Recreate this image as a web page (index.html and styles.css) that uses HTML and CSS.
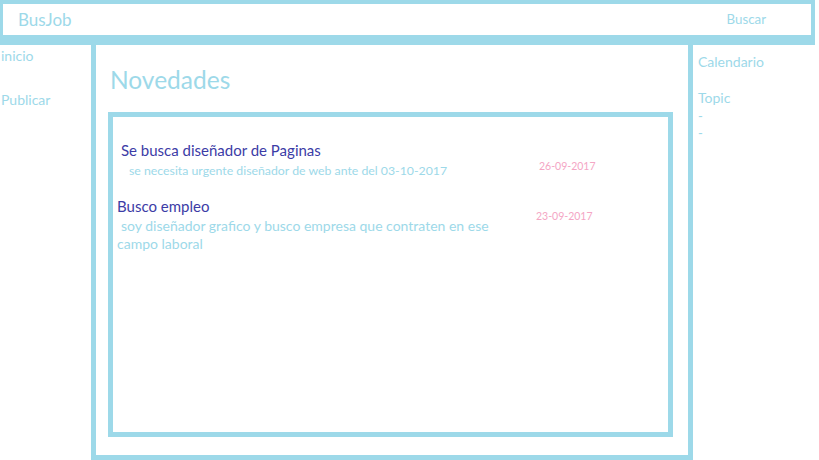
FILE: index.html
```html
<!DOCTYPE html>
<html lang="es">
<head>
<meta charset="utf-8">
<title>BusJob</title>
<link rel="stylesheet" href="styles.css">
</head>
<body>
<header class="topbar">
  <div class="brand">BusJob</div>
  <div class="search">Buscar</div>
</header>
<div class="layout">
  <nav class="leftnav">
    <p class="navlink">inicio</p>
    <p class="navlink">Publicar</p>
  </nav>
  <main class="center">
    <h1 class="title">Novedades</h1>
    <section class="feed">
      <article class="post post-first">
        <div class="post-text">
          <h2 class="post-title">Se busca diseñador de Paginas</h2>
          <p class="post-desc post-desc-indent">se necesita urgente diseñador de web ante del 03-10-2017</p>
        </div>
        <div class="post-date date-first">26-09-2017</div>
      </article>
      <article class="post post-second">
        <div class="post-text">
          <h2 class="post-title">Busco empleo</h2>
          <p class="post-desc post-desc-lead">soy diseñador grafico y busco empresa que contraten en ese campo laboral</p>
        </div>
        <div class="post-date date-second">23-09-2017</div>
      </article>
    </section>
  </main>
  <aside class="rightcol">
    <p class="side-item">Calendario</p>
    <p class="side-item side-topic">Topic</p>
    <p class="side-dash side-dash-first">-</p>
    <p class="side-dash">-</p>
  </aside>
</div>
</body>
</html>
```

FILE: styles.css
```css
* { box-sizing: border-box; }
html, body {
  margin: 0;
  padding: 0;
  background: #ffffff;
}
body {
  width: 819px;
  height: 460px;
  overflow: hidden;
  font-family: Lato, "Open Sans", sans-serif;
  color: #9dd9e9;
}
.topbar {
  width: 815px;
  height: 45px;
  border: 4px solid #9dd9e9;
  border-left-width: 3px;
  border-bottom-width: 10px;
  display: flex;
  align-items: center;
  justify-content: space-between;
  padding: 0 45px 0 15px;
}
.brand {
  font-size: 17px;
  color: #9dd9e9;
  margin-top: -1px;
}
.search {
  font-size: 13.3px;
  color: #9dd9e9;
  margin-top: -2px;
}
.layout {
  display: flex;
  height: 415px;
}
.leftnav {
  width: 91px;
  padding: 2px 0 0 1px;
}
.navlink {
  margin: 0 0 26px 0;
  font-size: 14px;
  line-height: 18px;
}
.center {
  width: 602px;
  border: 5px solid #9dd9e9;
  border-top: 0;
  padding: 19px 15px 18px 12px;
  display: flex;
  flex-direction: column;
}
.title {
  margin: 0 0 16px 2px;
  font-weight: normal;
  font-size: 24.5px;
  line-height: 32px;
  color: #9dd9e9;
}
.feed {
  flex: 1;
  border: 5px solid #9dd9e9;
  padding: 23px 8px 0 4px;
}
.post {
  display: flex;
  align-items: flex-start;
}
.post-text {
  width: 385px;
}
.post-title {
  margin: 0;
  font-weight: normal;
  font-size: 15px;
  line-height: 20px;
  color: #3c3ca6;
}
.post-first .post-title { padding-left: 4px; }
.post-desc {
  margin: 0;
  font-size: 14px;
  line-height: 18px;
  color: #9dd9e9;
}
.post-desc-indent {
  padding-left: 12px;
  font-size: 12.3px;
  margin-top: 2px;
}
.post-desc-lead {
  text-indent: 4px;
  margin-top: 1px;
}
.post-date {
  font-size: 10.5px;
  color: #f4a6c4;
}
.date-first { margin: 20px 0 0 37px; }
.date-second { margin: 14px 0 0 34px; }
.post-second { margin-top: 16px; }
.rightcol {
  flex: 1;
  padding: 8px 0 0 5px;
}
.side-item {
  margin: 0;
  font-size: 14px;
  line-height: 18px;
}
.side-topic { margin-top: 18px; }
.side-dash {
  margin: 0;
  font-size: 13px;
  line-height: 17px;
}
.side-dash-first { margin-top: 1px; }
```
